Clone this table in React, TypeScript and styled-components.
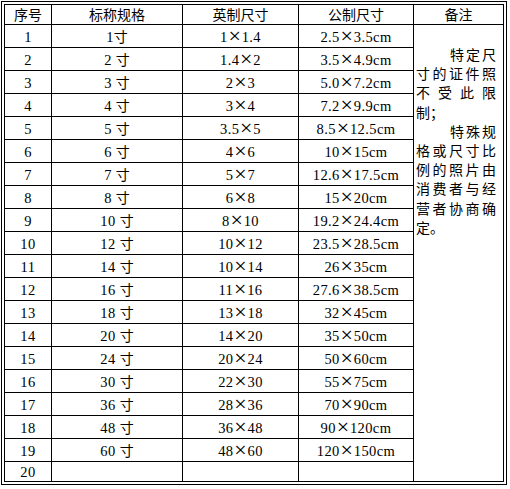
import React from 'react';
import styled, { createGlobalStyle } from 'styled-components';

const rows: string[][] = [
  ['1', '1寸', '1×1.4', '2.5×3.5cm'],
  ['2', '2 寸', '1.4×2', '3.5×4.9cm'],
  ['3', '3 寸', '2×3', '5.0×7.2cm'],
  ['4', '4 寸', '3×4', '7.2×9.9cm'],
  ['5', '5 寸', '3.5×5', '8.5×12.5cm'],
  ['6', '6 寸', '4×6', '10×15cm'],
  ['7', '7 寸', '5×7', '12.6×17.5cm'],
  ['8', '8 寸', '6×8', '15×20cm'],
  ['9', '10 寸', '8×10', '19.2×24.4cm'],
  ['10', '12 寸', '10×12', '23.5×28.5cm'],
  ['11', '14 寸', '10×14', '26×35cm'],
  ['12', '16 寸', '11×16', '27.6×38.5cm'],
  ['13', '18 寸', '13×18', '32×45cm'],
  ['14', '20 寸', '14×20', '35×50cm'],
  ['15', '24 寸', '20×24', '50×60cm'],
  ['16', '30 寸', '22×30', '55×75cm'],
  ['17', '36 寸', '28×36', '70×90cm'],
  ['18', '48 寸', '36×48', '90×120cm'],
  ['19', '60 寸', '48×60', '120×150cm'],
  ['20', '', '', ''],
];

const headers = ['序号', '标称规格', '英制尺寸', '公制尺寸', '备注'];

// latin runs get their own face, × gets a full-width box like SimSun
const Mixed: React.FC<{ text: string }> = ({ text }) => (
  <>
    {text.split(/(×)/).map((part, i) =>
      part === '×' ? (
        <Mul key={i}>×</Mul>
      ) : (
        part.split(/([0-9.a-z ]+)/).map((run, j) =>
          /^[0-9.a-z ]+$/.test(run) ? <Latin key={`${i}-${j}`}>{run}</Latin> : run
        )
      )
    )}
  </>
);

const App: React.FC = () => {
  return (
    <>
      <GlobalStyle />
      <Frame>
        <Grid>
          {headers.map((h) => (
            <HeadCell key={h}>{h}</HeadCell>
          ))}
          <NoteCell>
            <NotePara>特定尺寸的证件照不受此限制；</NotePara>
            <NotePara>特殊规格或尺寸比例的照片由消费者与经营者协商确定。</NotePara>
          </NoteCell>
          {rows.map((r, i) =>
            r.map((c, j) => (
              <Cell key={`${i}-${j}`} $last={i === rows.length - 1}>
                <Mixed text={c} />
              </Cell>
            ))
          )}
        </Grid>
      </Frame>
    </>
  );
};

const GlobalStyle = createGlobalStyle`
  body {
    margin: 0;
    background: #fff;
    color: #000;
    font-family: "Noto Sans CJK SC", sans-serif;
  }
`;

const Frame = styled.div`
  margin: 1px;
  width: fit-content;
  border: 1px solid #000;
  padding: 2px;
`;

const Grid = styled.div`
  display: grid;
  grid-template-columns: 46px 130px 115px 114px 89px;
  grid-template-rows: 19px repeat(19, 22px) 19px;
  gap: 1px;
  border: 1px solid #000;
  background: #000;
`;

const HeadCell = styled.div`
  background: #fff;
  text-align: center;
  font-size: 14px;
  line-height: 19px;
`;

const Cell = styled.div<{ $last?: boolean }>`
  background: #fff;
  text-align: center;
  font-size: 14px;
  line-height: ${(p) => (p.$last ? '19px' : '22px')};
  white-space: pre;
`;

const Latin = styled.span`
  font-family: "Liberation Serif", serif;
  font-size: 14.5px;
  letter-spacing: 0.4px;
`;

const Mul = styled.span`
  display: inline-block;
  width: 14px;
  text-align: center;
  font-family: "Liberation Serif", serif;
  font-size: 22px;
  line-height: 14px;
  vertical-align: -1px;
`;

const NoteCell = styled.div`
  grid-column: 5;
  grid-row: 2 / span 20;
  background: #fff;
  padding: 20px 7px 0 2px;
  font-size: 14px;
  line-height: 19.2px;
  text-align: justify;
`;

const NotePara = styled.p`
  margin: 0;
  text-indent: 34px;
`;

export default App;
